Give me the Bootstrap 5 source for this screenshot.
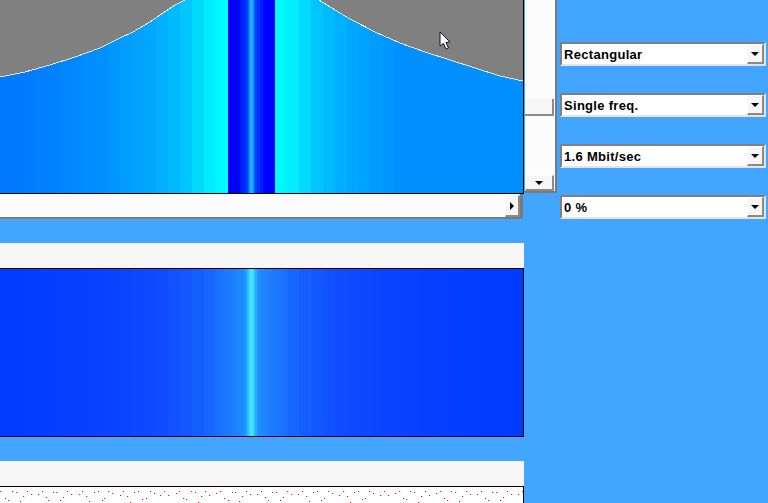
<!DOCTYPE html>
<html lang="en">
<head>
    <meta charset="UTF-8">
    <meta name="viewport" content="width=device-width, initial-scale=1.0">
    <title>Spectrum</title>
    <link href="https://cdn.jsdelivr.net/npm/bootstrap@5.3.0/dist/css/bootstrap.min.css" rel="stylesheet">
    <style>
        html, body {
            height: 503px;
            overflow: hidden;
        }

        body {
            background-color: #42a5ff;
            font-family: "Liberation Sans", Arial, sans-serif;
        }

        .plot-col {
            width: 557px;
            flex: none;
        }

        .plot-svg {
            display: block;
            flex: none;
        }

        .scroll-v {
            width: 32px;
            height: 193px;
            flex: none;
            margin-left: 1px;
            background: #fcfcfc;
            border-right: 2px solid #7a7a7a;
            border-bottom: 2px solid #7a7a7a;
        }

        .scroll-h {
            width: 523px;
            height: 25px;
            padding-top: 1px;
            background: #fcfcfc;
            border-bottom: 2px solid #7a7a7a;
            border-right: 3px solid #7a7a7a;
        }

        .scroll-v .scroll-track.upper {
            height: 99px;
        }

        .scroll-v .scroll-track.lower {
            flex: 1;
        }

        .scroll-thumb {
            height: 17px;
            background: #f6f6f6;
            border-right: 2px solid #8a8a8a;
            border-bottom: 2px solid #8a8a8a;
            margin-right: 1px;
        }

        .arrow-btn {
            background: #f6f6f6;
            border-top: 1px solid #fff;
            border-left: 1px solid #fff;
            border-right: 2px solid #8a8a8a;
            border-bottom: 2px solid #8a8a8a;
        }

        .scroll-v .arrow-btn {
            height: 16px;
            margin-right: 1px;
        }

        .scroll-h .arrow-btn {
            width: 15px;
            height: 22px;
        }

        .tri-down {
            width: 0;
            height: 0;
            border-left: 4px solid transparent;
            border-right: 4px solid transparent;
            border-top: 4px solid #000;
        }

        .tri-right {
            width: 0;
            height: 0;
            border-top: 4px solid transparent;
            border-bottom: 4px solid transparent;
            border-left: 4px solid #000;
        }

        .title-strip {
            width: 524px;
            height: 25px;
            background: #f6f6f6;
        }

        .settings-col {
            width: 206px;
            margin-left: 3px;
            padding-top: 42px;
            gap: 27px;
        }

        .combo {
            height: 24px;
            background: #fff;
            border-top: 2px solid #808080;
            border-left: 2px solid #808080;
            border-right: 2px solid #e4e4e4;
            border-bottom: 2px solid #e4e4e4;
            font-weight: 700;
            font-size: 13px;
            letter-spacing: .3px;
            color: #000;
            padding-left: 2px;
        }

        .combo .arrow-btn {
            width: 17px;
            height: 20px;
        }

        .combo-text {
            line-height: 1;
        }
    </style>
</head>
<body class="m-0">
    <div class="d-flex">
        <div class="plot-col d-flex flex-column">
            <div class="d-flex">
                <svg id="plotTop" class="plot-svg" width="524" height="194"></svg>
                <div class="scroll-v d-flex flex-column">
                    <div class="scroll-track upper"></div>
                    <div class="scroll-thumb"></div>
                    <div class="scroll-track lower"></div>
                    <div class="arrow-btn d-flex align-items-center justify-content-center"><div class="tri-down"></div></div>
                </div>
            </div>
            <div class="scroll-h d-flex justify-content-end">
                <div class="arrow-btn d-flex align-items-center justify-content-center"><div class="tri-right"></div></div>
            </div>
            <div class="title-strip mt-4"></div>
            <svg id="plotMid" class="plot-svg" width="524" height="169"></svg>
            <div class="title-strip mt-4"></div>
            <svg id="plotBottom" class="plot-svg" width="524" height="17"></svg>
        </div>
        <div class="settings-col d-flex flex-column">
            <div class="combo d-flex align-items-center justify-content-between"><span class="combo-text">Rectangular</span><div class="arrow-btn d-flex align-items-center justify-content-center"><div class="tri-down"></div></div></div>
            <div class="combo d-flex align-items-center justify-content-between"><span class="combo-text">Single freq.</span><div class="arrow-btn d-flex align-items-center justify-content-center"><div class="tri-down"></div></div></div>
            <div class="combo d-flex align-items-center justify-content-between"><span class="combo-text">1.6 Mbit/sec</span><div class="arrow-btn d-flex align-items-center justify-content-center"><div class="tri-down"></div></div></div>
            <div class="combo d-flex align-items-center justify-content-between"><span class="combo-text">0 %</span><div class="arrow-btn d-flex align-items-center justify-content-center"><div class="tri-down"></div></div></div>
        </div>
    </div>

    <script>
        const NS = 'http://www.w3.org/2000/svg';

        function add(svg, tag, attrs) {
            const el = document.createElementNS(NS, tag);
            Object.keys(attrs).forEach(k => el.setAttribute(k, attrs[k]));
            svg.appendChild(el);
            return el;
        }

        // color stops: [distance from centre line, r, g, b]
        function colorAt(stops, d) {
            for (let i = 1; i < stops.length; i++) {
                if (d <= stops[i][0]) {
                    const a = stops[i - 1], b = stops[i];
                    const t = (d - a[0]) / (b[0] - a[0]);
                    return `rgb(${[1, 2, 3].map(n => Math.round(a[n] + (b[n] - a[n]) * t)).join(',')})`;
                }
            }
            const l = stops[stops.length - 1];
            return `rgb(${l[1]},${l[2]},${l[3]})`;
        }

        // narrow bands near the carrier, wider ones further out
        function stripes(svg, height, stops, rightClamp) {
            const cx = 251.5;
            for (let x = 0; x < 524; x++) {
                let d = Math.abs(x + 0.5 - cx);
                if (rightClamp && x > cx) d = Math.min(d, rightClamp);
                if (d > 36) d = Math.floor(d / 12) * 12 + 6;
                else if (d > 3) d = Math.floor(d / 3) * 3 + 1.5;
                add(svg, 'rect', { x: x, y: 0, width: 1, height: height, fill: colorAt(stops, d) });
            }
        }

        const top1 = document.getElementById('plotTop');
        stripes(top1, 194, [
            [0, 32, 190, 255], [2, 16, 140, 255], [4, 0, 70, 255], [12, 0, 20, 255], [14, 0, 0, 255], [23, 0, 0, 255],
            [23.01, 0, 255, 255], [40, 0, 240, 255], [70, 0, 192, 255], [100, 0, 168, 255], [150, 0, 144, 255], [220, 0, 124, 255], [252, 0, 120, 255]
        ], 150);
        // gray region above the curve
        const pts = [[0, 77], [25, 72], [50, 65], [75, 57], [100, 48], [120, 38], [133, 32], [150, 22], [160, 15], [175, 5], [185, 0]];
        const ptsRight = [[319, 0], [335, 10], [350, 19], [375, 32], [400, 43], [425, 52], [450, 60], [475, 68], [500, 76], [523, 81]];
        const curve = pts.map(p => p.join(',')).join(' ');
        const curveR = ptsRight.map(p => p.join(',')).join(' ');
        add(top1, 'polygon', { points: `0,0 ${curve}`, fill: '#808080' });
        add(top1, 'polygon', { points: `${curveR} 523,0`, fill: '#808080' });
        add(top1, 'polyline', { points: curve, fill: 'none', stroke: '#e8e8e8', 'stroke-width': 1, 'shape-rendering': 'crispEdges' });
        add(top1, 'polyline', { points: curveR, fill: 'none', stroke: '#e8e8e8', 'stroke-width': 1, 'shape-rendering': 'crispEdges' });
        add(top1, 'rect', { x: 0, y: 193, width: 524, height: 1, fill: '#000' });
        add(top1, 'rect', { x: 523, y: 0, width: 1, height: 194, fill: '#000' });
        // mouse pointer
        add(top1, 'path', { d: 'M440 32 L440 46 L443.5 43.5 L446 49 L448.5 48 L446 42.5 L450 42 Z', fill: '#fff', stroke: '#101030', 'stroke-width': 1 });

        const mid = document.getElementById('plotMid');
        stripes(mid, 169, [
            [0, 64, 230, 255], [1.5, 64, 230, 255], [3, 48, 190, 255], [8, 32, 140, 255], [25, 28, 120, 255], [50, 20, 95, 255], [90, 16, 75, 255], [150, 10, 64, 255], [252, 0, 60, 255], [272, 0, 60, 255]
        ]);
        add(mid, 'rect', { x: 0, y: 0, width: 524, height: 1, fill: '#000' });
        add(mid, 'rect', { x: 0, y: 168, width: 524, height: 1, fill: '#000' });
        add(mid, 'rect', { x: 523, y: 0, width: 1, height: 169, fill: '#000' });

        const bottom = document.getElementById('plotBottom');
        add(bottom, 'rect', { x: 0, y: 0, width: 524, height: 17, fill: '#fff' });
        // scatter points, read off the plot as [x, y]
        const noise = [[0,5],[12,5],[16,6],[27,5],[31,8],[38,8],[42,5],[53,6],[56,6],[67,5],[71,8],[79,8],[82,5],[86,10],[94,6],[98,5],[108,5],[112,7],[120,9],[123,5],[127,10],[134,6],[138,5],[142,13],[146,12],[150,5],[154,7],[160,9],[164,5],[168,9],[176,7],[179,5],[183,12],[186,13],[191,5],[195,6],[201,10],[205,5],[209,9],[216,7],[220,5],[224,12],[228,14],[232,6],[235,6],[239,15],[242,10],[246,5],[250,8],[257,8],[261,5],
            [5,12],[8,14],[20,15],[23,10],[46,11],[48,14],[60,14],[63,11],[89,15],[102,14],[104,12],[130,16],[198,16],
            [272,6],[276,6],[287,5],[291,8],[298,8],[302,5],[313,6],[317,5],[328,5],[332,7],[339,9],[343,5],[347,10],[354,6],[358,5],[369,5],[373,7],[380,9],[384,5],[388,9],[395,7],[399,5],[403,12],[406,13],[410,5],[414,6],[421,10],[425,5],[429,9],[436,7],[440,5],[444,12],[447,14],[451,5],[455,6],[462,10],[466,5],[470,8],[477,8],[481,5],[485,12],[488,14],[492,6],[496,6],[500,14],[503,11],[507,5],[511,8],[518,8],[522,5],
            [265,11],[268,14],[280,14],[283,11],[306,10],[309,15],[321,14],[324,12],[350,16],[362,13],[365,12],[418,16],[459,15]];
        noise.forEach(p => {
            add(bottom, 'rect', { x: p[0], y: p[1], width: 2, height: 1, fill: '#ffd0d0' });
            add(bottom, 'rect', { x: p[0], y: p[1], width: 1, height: 1, fill: '#f01010' });
        });
        add(bottom, 'rect', { x: 0, y: 0, width: 524, height: 1, fill: '#000' });
        add(bottom, 'rect', { x: 523, y: 0, width: 1, height: 17, fill: '#000' });
    </script>
    <script src="https://cdn.jsdelivr.net/npm/bootstrap@5.3.0/dist/js/bootstrap.bundle.min.js"></script>
</body>
</html>
